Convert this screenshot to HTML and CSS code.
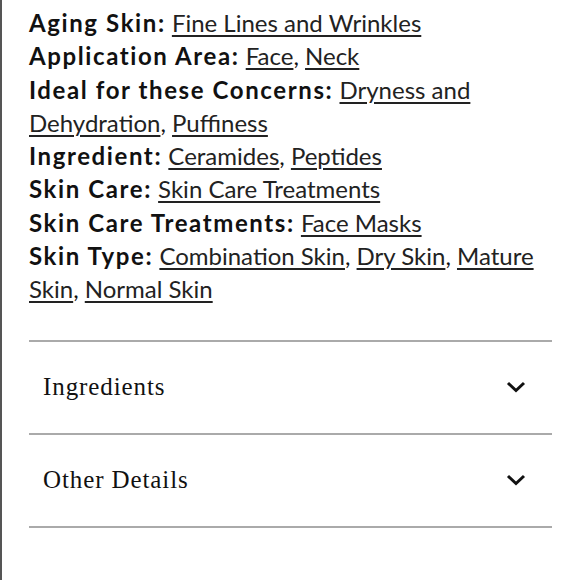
FILE: index.html
```html
<!DOCTYPE html>
<html lang="en">
<head>
<meta charset="utf-8">
<title>Product details</title>
<link rel="stylesheet" href="styles.css">
</head>
<body>
<div class="page">
  <div class="attrs">
    <p class="attr"><span class="label">Aging Skin:</span> <a href="#">Fine Lines and Wrinkles</a></p>
    <p class="attr"><span class="label">Application Area:</span> <a href="#">Face</a>, <a href="#">Neck</a></p>
    <p class="attr"><span class="label">Ideal for these Concerns:</span> <a href="#">Dryness and Dehydration</a>, <a href="#">Puffiness</a></p>
    <p class="attr"><span class="label">Ingredient:</span> <a href="#">Ceramides</a>, <a href="#">Peptides</a></p>
    <p class="attr"><span class="label">Skin Care:</span> <a href="#">Skin Care Treatments</a></p>
    <p class="attr"><span class="label">Skin Care Treatments:</span> <a href="#">Face Masks</a></p>
    <p class="attr"><span class="label">Skin Type:</span> <a href="#">Combination Skin</a>, <a href="#">Dry Skin</a>, <a href="#">Mature Skin</a>, <a href="#">Normal Skin</a></p>
  </div>
  <div class="accordion">
    <div class="acc-item">
      <span class="acc-title">Ingredients</span>
      <svg class="chev" width="20" height="12" viewBox="0 0 20 12"><path d="M2 2 L10 9.5 L18 2" fill="none" stroke="#111" stroke-width="3" stroke-linecap="butt" stroke-linejoin="miter"/></svg>
    </div>
    <div class="acc-item">
      <span class="acc-title">Other Details</span>
      <svg class="chev" width="20" height="12" viewBox="0 0 20 12"><path d="M2 2 L10 9.5 L18 2" fill="none" stroke="#111" stroke-width="3" stroke-linecap="butt" stroke-linejoin="miter"/></svg>
    </div>
  </div>
</div>
</body>
</html>
```
FILE: styles.css
```css
html, body {
  margin: 0;
  padding: 0;
  background: #fff;
}
.page {
  border-left: 2px solid #555;
  min-height: 580px;
  box-sizing: border-box;
  padding: 6px 28px 0 27px;
}
.attrs {
  font-family: Lato, "Liberation Sans", sans-serif;
  font-size: 24px;
  line-height: 33.3px;
  color: #111;
}
.attr {
  margin: 0;
}
.label {
  font-weight: 700;
  letter-spacing: 1.6px;
}
.attr a {
  color: #222;
  text-decoration: underline;
  text-underline-offset: 3px;
  text-decoration-thickness: 1.5px;
}
.accordion {
  margin-top: 34px;
  border-top: 2px solid #aaa;
}
.acc-item {
  display: flex;
  align-items: center;
  justify-content: space-between;
  height: 91px;
  padding: 0 26px 0 14px;
  border-bottom: 2px solid #aaa;
}
.acc-title {
  font-family: "Liberation Serif", serif;
  font-size: 25px;
  letter-spacing: 0.9px;
  color: #111;
}
.chev {
  display: block;
}
```
